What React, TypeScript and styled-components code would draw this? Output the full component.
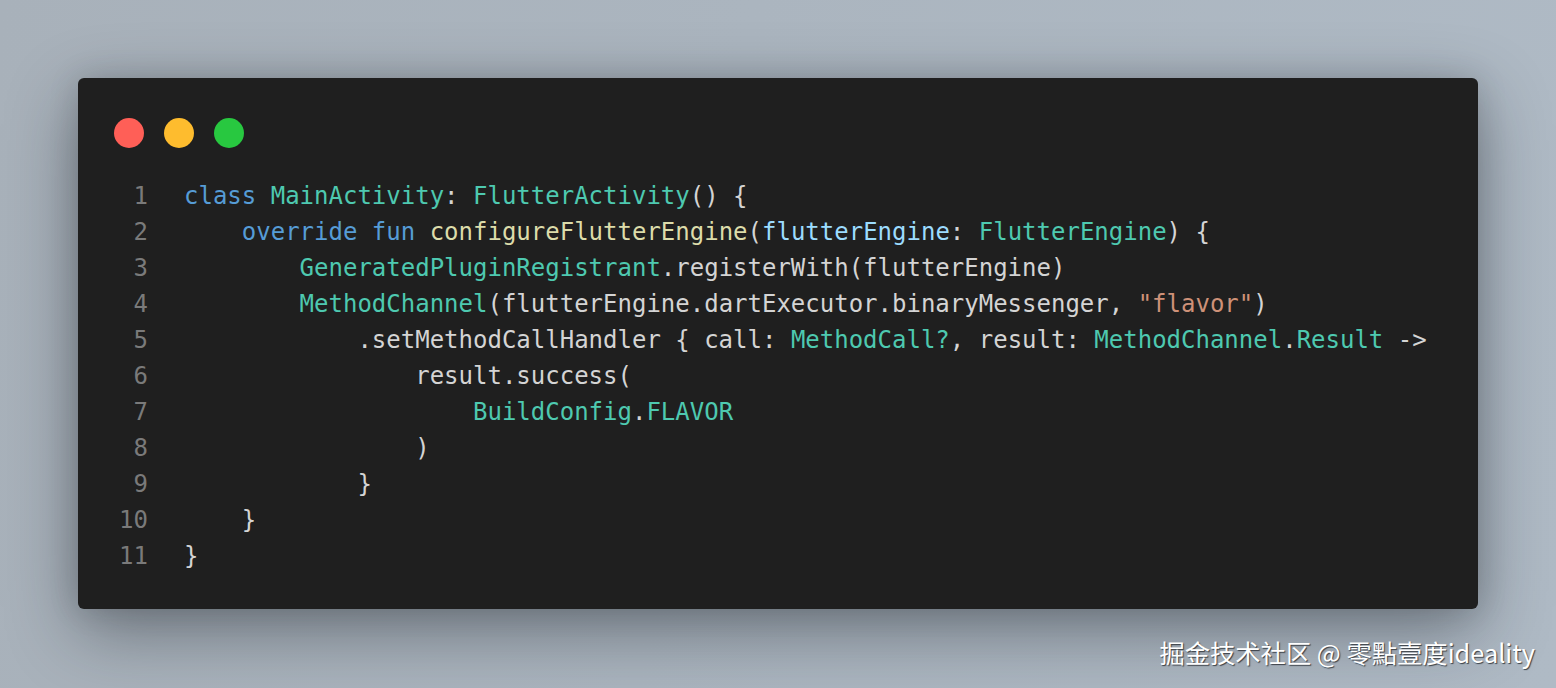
import React from "react";
import styled, { createGlobalStyle } from "styled-components";

const Global = createGlobalStyle`
  html, body { margin: 0; padding: 0; }
  body { width: 1556px; height: 688px; overflow: hidden; }
`;

const Page = styled.div`
  position: relative;
  width: 1556px;
  height: 688px;
  box-sizing: border-box;
  padding: 78px 78px 0 78px;
  overflow: hidden;
  background: linear-gradient(100deg, #a8b1ba 0%, #abb5bf 45%, #afbac5 100%);
`;

const Card = styled.div`
  width: 1400px;
  height: 531px;
  box-sizing: border-box;
  background: #1f1f1f;
  border-radius: 6px;
  padding: 40px 36px 35px 36px;
  display: flex;
  flex-direction: column;
  gap: 30px;
  box-shadow: 0 22px 70px rgba(20, 25, 30, 0.42), 0 0 30px rgba(20, 25, 30, 0.15);
`;

const Lights = styled.div`
  display: flex;
  gap: 20px;
`;

const Light = styled.span<{ $c: string }>`
  width: 30px;
  height: 30px;
  border-radius: 50%;
  background: ${(p) => p.$c};
`;

const Code = styled.div`
  display: flex;
  flex-direction: column;
  font-family: "DejaVu Sans Mono", "Liberation Mono", monospace;
  font-size: 24px;
  line-height: 36px;
  color: #d4d4d4;
  white-space: pre;
`;

const Line = styled.div`
  display: flex;
  height: 36px;
`;

const Num = styled.span`
  width: 34px;
  flex: none;
  text-align: right;
  color: #7a7a7a;
  margin-right: 36px;
`;

const Text = styled.span``;

type Kind = "kw" | "ty" | "fn" | "pa" | "st" | "tx";
const colors: Record<Kind, string> = {
  kw: "#569cd6",
  ty: "#4ec9b0",
  fn: "#dcdcaa",
  pa: "#9cdcfe",
  st: "#ce9178",
  tx: "#d4d4d4",
};

const Tok = styled.span<{ $k: Kind }>`
  color: ${(p) => colors[p.$k]};
`;

const Watermark = styled.div`
  position: absolute;
  right: 21px;
  top: 636px;
  font-family: "Noto Sans CJK SC", "Noto Sans", sans-serif;
  font-size: 25.3px;
  line-height: 32px;
  color: #ffffff;
  text-shadow: 1px 1px 1px rgba(40, 45, 50, 0.85);
`;

const lines: [Kind, string][][] = [
  [["kw", "class"], ["tx", " "], ["ty", "MainActivity"], ["tx", ": "], ["ty", "FlutterActivity"], ["tx", "() {"]],
  [["tx", "    "], ["kw", "override"], ["tx", " "], ["kw", "fun"], ["tx", " "], ["fn", "configureFlutterEngine"], ["tx", "("], ["pa", "flutterEngine"], ["tx", ": "], ["ty", "FlutterEngine"], ["tx", ") {"]],
  [["tx", "        "], ["ty", "GeneratedPluginRegistrant"], ["tx", ".registerWith(flutterEngine)"]],
  [["tx", "        "], ["ty", "MethodChannel"], ["tx", "(flutterEngine.dartExecutor.binaryMessenger, "], ["st", "\"flavor\""], ["tx", ")"]],
  [["tx", "            .setMethodCallHandler { call: "], ["ty", "MethodCall?"], ["tx", ", result: "], ["ty", "MethodChannel"], ["tx", "."], ["ty", "Result"], ["tx", " ->"]],
  [["tx", "                result.success("]],
  [["tx", "                    "], ["ty", "BuildConfig"], ["tx", "."], ["ty", "FLAVOR"]],
  [["tx", "                )"]],
  [["tx", "            }"]],
  [["tx", "    }"]],
  [["tx", "}"]],
];

export default function App() {
  return (
    <>
      <Global />
      <Page>
        <Card>
          <Lights>
            <Light $c="#ff5f57" />
            <Light $c="#febc2e" />
            <Light $c="#28c840" />
          </Lights>
          <Code>
            {lines.map((toks, i) => (
              <Line key={i}>
                <Num>{i + 1}</Num>
                <Text>
                  {toks.map(([k, s], j) => (
                    <Tok key={j} $k={k}>
                      {s}
                    </Tok>
                  ))}
                </Text>
              </Line>
            ))}
          </Code>
        </Card>
        <Watermark>掘金技术社区 @ 零點壹度ideality</Watermark>
      </Page>
    </>
  );
}
